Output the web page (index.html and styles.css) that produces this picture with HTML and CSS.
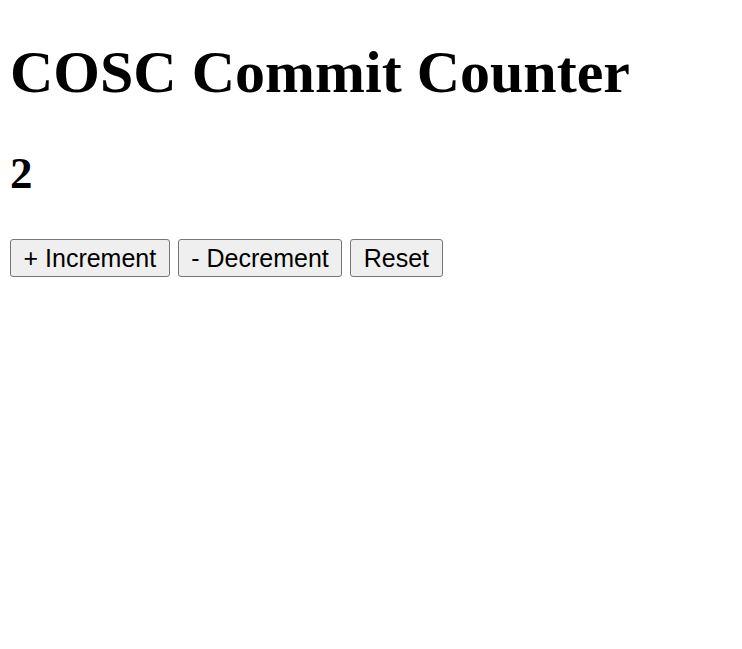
FILE: index.html
```html
<!DOCTYPE html>
<html>
<head>
<meta charset="utf-8">
<link rel="stylesheet" href="styles.css">
<title>COSC Commit Counter</title>
</head>
<body class="page">
<h1 class="title">COSC Commit Counter</h1>
<h2 class="count">2</h2>
<div class="controls">
<button class="btn">+ Increment</button>
<button class="btn">- Decrement</button>
<button class="btn">Reset</button>
</div>
</body>
</html>
```
FILE: styles.css
```css
.page {
  margin: 10px;
  font-family: "Liberation Serif", "Times New Roman", serif;
  color: #000;
  background: #fff;
}
.title {
  font-size: 60px;
  font-weight: bold;
  margin: 28px 0 0 0;
  line-height: 69px;
}
.count {
  font-size: 45px;
  font-weight: bold;
  margin: 40px 0 0 0;
  line-height: 52px;
}
.controls {
  display: flex;
  gap: 8px;
  margin-top: 40px;
}
.btn {
  font-family: "Liberation Sans", Arial, sans-serif;
  font-size: 25px;
  padding: 2px 12.5px;
  height: 38px;
  border: 1px solid #767676;
  border-radius: 3px;
  background: #efefef;
  color: #000;
}
```
